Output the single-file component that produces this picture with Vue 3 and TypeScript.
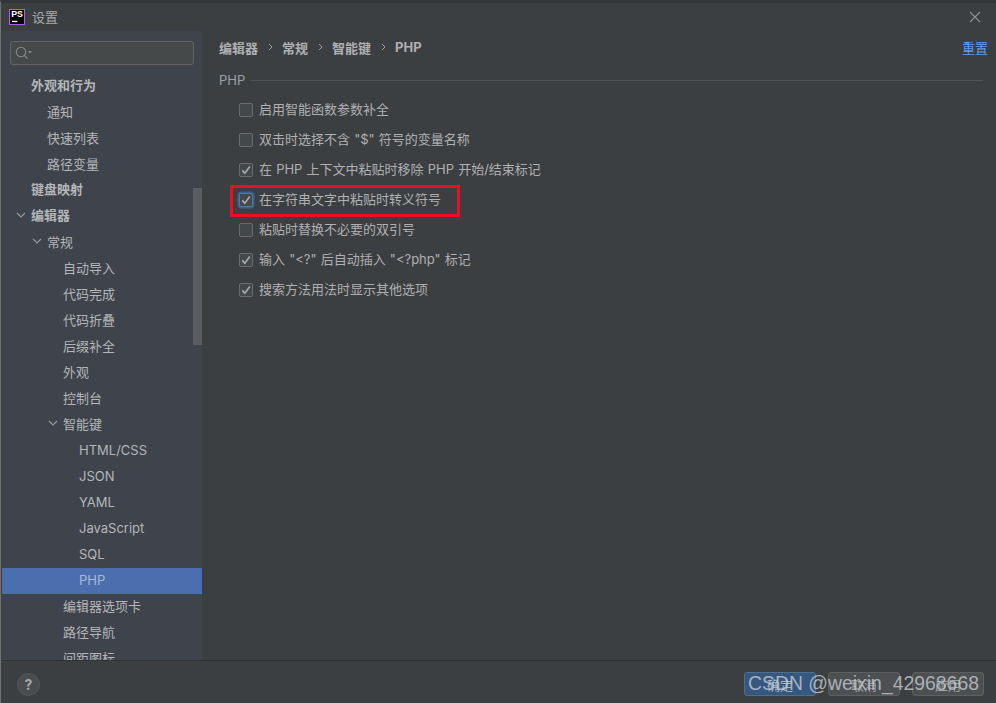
<script setup lang="ts">
interface TreeRow { label: string; level: number; bold?: boolean; arrow?: boolean; selected?: boolean; latin?: boolean }
const tree: TreeRow[] = [
  { label: '外观和行为', level: 1, bold: true },
  { label: '通知', level: 2 },
  { label: '快速列表', level: 2 },
  { label: '路径变量', level: 2 },
  { label: '键盘映射', level: 1, bold: true },
  { label: '编辑器', level: 1, bold: true, arrow: true },
  { label: '常规', level: 2, arrow: true },
  { label: '自动导入', level: 3 },
  { label: '代码完成', level: 3 },
  { label: '代码折叠', level: 3 },
  { label: '后缀补全', level: 3 },
  { label: '外观', level: 3 },
  { label: '控制台', level: 3 },
  { label: '智能键', level: 3, arrow: true },
  { label: 'HTML/CSS', level: 4, latin: true },
  { label: 'JSON', level: 4, latin: true },
  { label: 'YAML', level: 4, latin: true },
  { label: 'JavaScript', level: 4, latin: true },
  { label: 'SQL', level: 4, latin: true },
  { label: 'PHP', level: 4, latin: true, selected: true },
  { label: '编辑器选项卡', level: 3 },
  { label: '路径导航', level: 3 },
  { label: '间距图标', level: 3 },
]
const crumbs = ['编辑器', '常规', '智能键', 'PHP']
const options = [
  { label: '启用智能函数参数补全', checked: false },
  { label: '双击时选择不含 "$" 符号的变量名称', checked: false },
  { label: '在 PHP 上下文中粘贴时移除 PHP 开始/结束标记', checked: true },
  { label: '在字符串文字中粘贴时转义符号', checked: true, focused: true },
  { label: '粘贴时替换不必要的双引号', checked: false },
  { label: '输入 "<?" 后自动插入 "<?php" 标记', checked: true },
  { label: '搜索方法用法时显示其他选项', checked: true },
]
</script>

<template>
  <div class="window">
    <header class="titlebar">
      <svg class="logo" width="16" height="16" viewBox="0 0 16 16">
        <rect x="0.5" y="0.5" width="15" height="15" fill="#000" stroke="#b35cf0" />
        <text x="2.2" y="8.4" class="logo-text">PS</text>
        <rect x="3" y="11.8" width="5.4" height="1.3" fill="#fff" />
      </svg>
      <span class="title">设置</span>
      <svg class="close" width="12" height="12" viewBox="0 0 12 12">
        <path d="M1 1 L11 11 M11 1 L1 11" stroke="#8f9193" stroke-width="1.1" fill="none" />
      </svg>
    </header>

    <div class="body">
      <aside class="sidebar">
        <div class="search">
          <svg width="18" height="14" viewBox="0 0 18 14">
            <circle cx="6" cy="6" r="4.7" fill="none" stroke="#85888a" stroke-width="1.1" />
            <path d="M9.4 9.4 L12.6 12.6" stroke="#85888a" stroke-width="1.2" />
            <path d="M13 5 L17 5 L15 7.4 Z" fill="#85888a" />
          </svg>
        </div>
        <div class="tree">
          <div
            v-for="row in tree"
            :key="row.label"
            class="row"
            :class="['lv' + row.level, { bold: row.bold, selected: row.selected, latin: row.latin }]"
          >
            <svg v-if="row.arrow" class="arrow" width="10" height="6" viewBox="0 0 10 6">
              <path d="M1 1 L5 5 L9 1" stroke="#9a9da0" stroke-width="1.1" fill="none" />
            </svg>
            <span>{{ row.label }}</span>
          </div>
          <div class="scrollbar"></div>
        </div>
      </aside>

      <main class="content">
        <div class="top">
          <nav class="crumbs">
            <template v-for="(c, i) in crumbs" :key="c">
              <svg v-if="i > 0" class="sep" width="5" height="8" viewBox="0 0 5 8">
                <path d="M1 1 L4 4 L1 7" stroke="#9a9da0" stroke-width="1" fill="none" />
              </svg>
              <span class="crumb">{{ c }}</span>
            </template>
          </nav>
          <a class="reset">重置</a>
        </div>

        <div class="group-title">
          <span>PHP</span>
          <i class="line"></i>
        </div>

        <div class="options">
          <label v-for="o in options" :key="o.label" class="option">
            <span class="box" :class="{ focused: o.focused }">
              <svg v-if="o.checked" width="10" height="10" viewBox="0 0 10 10">
                <path d="M1.2 5.4 L3.8 8.2 L8.8 1.4" stroke="#a7a9ab" stroke-width="1.7" fill="none" />
              </svg>
            </span>
            <span class="option-label">{{ o.label }}</span>
            <i v-if="o.focused" class="highlight"></i>
          </label>
        </div>
      </main>
    </div>

    <footer class="footer">
      <span class="help">?</span>
      <div class="buttons">
        <button class="btn primary">确定</button>
        <button class="btn">取消</button>
        <button class="btn">应用</button>
      </div>
      <span class="watermark">CSDN @weixin_42968668</span>
    </footer>
  </div>
</template>

<style>
html, body { margin: 0; background: #3c3f41; }
</style>

<style scoped>
.window {
  width: 996px;
  height: 703px;
  box-sizing: border-box;
  display: flex;
  flex-direction: column;
  overflow: hidden;
  background: #3c3f41;
  border-top: 3px solid #343638;
  border-left: 1px solid #707274;
  color: #b3b5b7;
  font-family: Inter, "Noto Sans CJK SC", sans-serif;
  font-size: 13px;
}
.titlebar {
  height: 28px;
  flex: none;
  display: flex;
  align-items: center;
  padding: 0 15px 0 8px;
}
.logo { flex: none; }
.logo-text {
  fill: #fff;
  font: 700 8.8px "Liberation Sans", sans-serif;
}
.title { margin: 0 0 2px 7px; font-size: 13px; color: #a9abad; }
.close { margin-left: auto; }
.body { flex: 1; display: flex; min-height: 0; }
.sidebar {
  width: 200px;
  margin-left: 1px;
  flex: none;
  display: flex;
  flex-direction: column;
  background: #3e434c;
  overflow: hidden;
}
.search {
  width: 184px;
  height: 24px;
  box-sizing: border-box;
  margin: 10px 0 9px 8px;
  padding-left: 4px;
  display: flex;
  align-items: center;
  flex: none;
  background: #45494a;
  border: 1px solid #646464;
  border-radius: 3px;
}
.tree { position: relative; flex: 1; min-height: 0; overflow: hidden; }
.row {
  position: relative;
  height: 26px;
  box-sizing: border-box;
  padding-bottom: 4px;
  display: flex;
  align-items: center;
  color: #b4b6b8;
  white-space: nowrap;
}
.row.latin { padding-bottom: 3px; }
.row.lv1 { padding-left: 29px; }
.row.lv2 { padding-left: 45px; }
.row.lv3 { padding-left: 61px; }
.row.lv4 { padding-left: 77px; }
.row.bold { font-weight: 700; padding-bottom: 5px; }
.row.selected { background: #4b6eaf; color: #a9b9d6; }
.arrow { position: absolute; top: 8px; margin-left: -15px; }
.scrollbar {
  position: absolute;
  right: 0;
  top: 114px;
  width: 9px;
  height: 157px;
  background: #5a5d61;
}
.content {
  flex: 1;
  min-width: 0;
  display: flex;
  flex-direction: column;
  padding: 0 8px 0 17px;
}
.top {
  height: 34px;
  padding-bottom: 2px;
  box-sizing: border-box;
  display: flex;
  align-items: center;
  justify-content: space-between;
}
.crumbs { display: flex; align-items: center; }
.crumb { font-weight: 700; color: #aeb0b2; }
.sep { margin: 0 9px 0 10px; }
.reset { color: #589df6; }
.group-title {
  margin-top: 6px;
  height: 18px;
  display: flex;
  align-items: center;
  color: #98a2aa;
  padding-right: 5px;
}
.line { flex: 1; height: 1px; margin-left: 6px; background: #515355; }
.options { margin-top: 5px; padding-left: 20px; display: flex; flex-direction: column; }
.option {
  position: relative;
  height: 30px;
  display: flex;
  align-items: center;
  gap: 6px;
  color: #aeb0b2;
}
.option-label { margin-bottom: 2px; word-spacing: 0.5px; }
.box {
  width: 14px;
  height: 14px;
  margin-top: 2px;
  box-sizing: border-box;
  flex: none;
  display: flex;
  align-items: center;
  justify-content: center;
  background: #43494a;
  border: 1px solid #6b6b6b;
  border-radius: 2px;
}
.box.focused {
  border-color: #4d7aa8;
  box-shadow: 0 0 0 1.5px #3d6185;
}
.highlight {
  position: absolute;
  left: -9px;
  top: 1px;
  width: 230px;
  height: 32px;
  box-sizing: border-box;
  border: 3px solid #e81123;
}
.footer {
  position: relative;
  height: 43px;
  flex: none;
  box-sizing: border-box;
  border-top: 1px solid #323232;
  display: flex;
  align-items: center;
  justify-content: space-between;
  padding: 4px 12px 0 16px;
}
.help {
  width: 23px;
  height: 23px;
  margin-top: 1px;
  border-radius: 50%;
  background: #4a4d4f;
  border: 1px solid #555;
  box-sizing: border-box;
  display: flex;
  align-items: center;
  justify-content: center;
  font-weight: 700;
  font-size: 14px;
  color: #a8aaac;
}
.buttons { display: flex; gap: 12px; }
.btn {
  width: 72px;
  height: 24px;
  padding: 0;
  box-sizing: border-box;
  background: #4c5052;
  border: 1px solid #5e6060;
  border-radius: 3px;
  color: #9fa1a3;
  font: 13px "Noto Sans CJK SC", sans-serif;
}
.btn.primary { background: #365880; border-color: #4c708c; color: #a8b4c2; }
.watermark {
  position: absolute;
  left: 747px;
  top: 7px;
  font: 19.4px/30px "Liberation Sans", sans-serif;
  color: rgba(200, 205, 210, 0.78);
  white-space: nowrap;
}
</style>
